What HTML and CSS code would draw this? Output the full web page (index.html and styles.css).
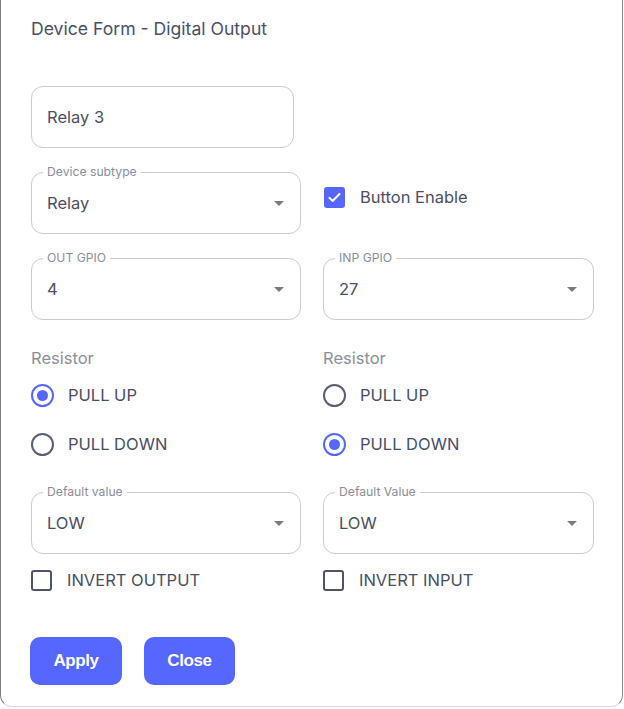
FILE: index.html
```html
<!DOCTYPE html>
<html>
<head>
<meta charset="utf-8">
<link rel="stylesheet" href="styles.css">
</head>
<body>
<div class="dialog">
  <h1 class="title">Device Form - Digital Output</h1>
  <div class="text-field"><span class="value">Relay 3</span></div>
  <div class="grid">
    <div class="select"><span class="float">Device subtype</span><span class="value">Relay</span><span class="arrow"></span></div>
    <div class="check-cell">
      <div class="check"><span class="box checked"><svg width="15" height="15" viewBox="0 0 24 24"><path d="M4 12.5l5 5L20 6.5" fill="none" stroke="#fff" stroke-width="3.2" stroke-linecap="round" stroke-linejoin="round"/></svg></span><span>Button Enable</span></div>
    </div>
    <div class="select"><span class="float">OUT GPIO</span><span class="value">4</span><span class="arrow"></span></div>
    <div class="select"><span class="float">INP GPIO</span><span class="value">27</span><span class="arrow"></span></div>
    <div class="group">
      <div class="group-label">Resistor</div>
      <div class="radio-row first"><span class="radio on"></span><span>PULL UP</span></div>
      <div class="radio-row"><span class="radio"></span><span>PULL DOWN</span></div>
    </div>
    <div class="group">
      <div class="group-label">Resistor</div>
      <div class="radio-row first"><span class="radio"></span><span>PULL UP</span></div>
      <div class="radio-row"><span class="radio on"></span><span>PULL DOWN</span></div>
    </div>
    <div class="select default"><span class="float">Default value</span><span class="value">LOW</span><span class="arrow"></span></div>
    <div class="select default"><span class="float">Default Value</span><span class="value">LOW</span><span class="arrow"></span></div>
    <div class="check invert"><span class="box"></span><span>INVERT OUTPUT</span></div>
    <div class="check invert"><span class="box"></span><span>INVERT INPUT</span></div>
  </div>
  <div class="actions">
    <button class="btn apply">Apply</button>
    <button class="btn close">Close</button>
  </div>
</div>
</body>
</html>
```
FILE: styles.css
```css
html, body {
  margin: 0;
  padding: 0;
  background: #ffffff;
}
body {
  font-family: Inter, "Noto Sans", sans-serif;
  color: #4a4f63;
  width: 624px;
  height: 709px;
  overflow: hidden;
}
.dialog {
  box-sizing: border-box;
  width: 623px;
  height: 707px;
  background: #fff;
  border-left: 1px solid #7d7d7d;
  border-right: 1px solid #8a8a8a;
  border-bottom: 1px solid #d6d6d6;
  border-radius: 0 0 12px 12px;
  padding: 18px 0 0 30px;
}
.title {
  margin: 0;
  font-size: 17.6px;
  font-weight: 400;
  line-height: 22px;
  color: #4a4f66;
}
.text-field {
  box-sizing: border-box;
  margin-top: 46px;
  width: 263px;
  height: 62px;
  border: 1px solid #c9cbd1;
  border-radius: 12px;
  display: flex;
  align-items: center;
  padding-left: 15px;
  font-size: 16.5px;
}
.grid {
  margin-top: 24px;
  display: grid;
  grid-template-columns: 270px 271px;
  column-gap: 22px;
  row-gap: 24px;
  width: 563px;
}
.select {
  position: relative;
  box-sizing: border-box;
  height: 62px;
  border: 1px solid #c9cbd1;
  border-radius: 12px;
  display: flex;
  align-items: center;
  justify-content: space-between;
  padding: 0 15px 0 15px;
  font-size: 16.5px;
}
.float {
  position: absolute;
  top: -8px;
  left: 11px;
  padding: 0 4px;
  background: #fff;
  font-size: 12.2px;
  line-height: 14px;
  color: #8b8e9a;
}
.arrow {
  width: 0;
  height: 0;
  border-left: 5px solid transparent;
  border-right: 5px solid transparent;
  border-top: 5px solid #7a7c84;
  margin-right: 1px;
}
.check-cell {
  padding-top: 14px;
}
.check {
  display: flex;
  align-items: center;
  font-size: 16.5px;
  height: 22px;
  gap: 15px;
}
.box {
  box-sizing: border-box;
  width: 21px;
  height: 21px;
  border: 2px solid #4f5468;
  border-radius: 3px;
  display: flex;
  align-items: center;
  justify-content: center;
  flex: none;
}
.box.checked {
  background: #5567ff;
  border-color: #5567ff;
}
.check-cell .check {
  margin-left: 1px;
}
.group {
  margin-top: 4px;
}
.group-label {
  font-size: 16.5px;
  line-height: 20px;
  color: #8d909b;
}
.radio-row {
  display: flex;
  align-items: center;
  gap: 14px;
  height: 24px;
  font-size: 16.5px;
  margin-top: 25px;
}
.radio-row.first {
  margin-top: 15px;
}
.radio {
  box-sizing: border-box;
  width: 23px;
  height: 23px;
  border: 2px solid #5a5e70;
  border-radius: 50%;
  flex: none;
  display: flex;
  align-items: center;
  justify-content: center;
}
.radio.on {
  border-color: #5567ff;
}
.radio.on::after {
  content: "";
  width: 11px;
  height: 11px;
  border-radius: 50%;
  background: #5567ff;
}
.select.default {
  margin-top: 12px;
}
.check.invert {
  margin-top: -9px;
}
.actions {
  margin-top: 46px;
  margin-left: -1px;
  display: flex;
  gap: 22px;
}
.btn {
  height: 48px;
  border: none;
  border-radius: 10px;
  background: #5567ff;
  color: #fff;
  font-family: "Liberation Sans", Arial, sans-serif;
  font-weight: 700;
  font-size: 17px;
  letter-spacing: -0.4px;
  padding: 0;
}
.apply { width: 92px; }
.close { width: 91px; }
```
